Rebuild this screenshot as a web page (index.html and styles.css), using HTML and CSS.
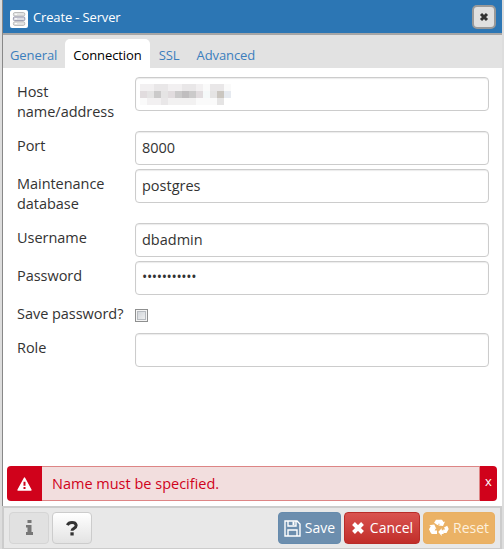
FILE: index.html
```html
<!DOCTYPE html>
<html lang="en">
<head>
<meta charset="utf-8">
<title>Create - Server</title>
<link rel="stylesheet" href="styles.css">
</head>
<body>
<div class="dialog">
  <header class="titlebar">
    <svg class="server" width="18" height="18" viewBox="0 0 18 18"><rect width="18" height="18" rx="2" fill="#fff"/><g fill="#e4e4e4" stroke="#b4b4b4" stroke-width=".9"><rect x="3.4" y="2.5" width="11.4" height="3.6" rx="1.5"/><rect x="3.4" y="11.8" width="11.4" height="3.6" rx="1.5"/></g><rect x="3.4" y="7" width="11.4" height="3.6" rx="1" fill="#dedee4" stroke="#9999ae"/><path d="M5 4.3h2M5 8.8h2M5 13.6h2" stroke="#fff"/></svg>
    <h1 class="title">Create - Server</h1>
    <button class="close" aria-label="Close"><svg width="10" height="10" viewBox="0 0 10 10"><path d="M2 2l6 6M8 2L2 8" stroke="#333" stroke-width="3"/></svg></button>
  </header>
  <nav class="tabs"><a class="tab">General</a><a class="tab active">Connection</a><a class="tab">SSL</a><a class="tab">Advanced</a></nav>
  <main class="form">
    <div class="row"><label class="label">Host name/address</label><div class="input masked">
      <svg width="91" height="21" viewBox="0 0 13 3" shape-rendering="crispEdges"><path fill="#f2f0f1" d="M0 0h13v1H0zM0 2h3v1H0zM8 2h4v1H8z"/><path fill="#e9e7e8" d="M2 0h2v1H2zM6 0h2v1H6zM10 0h2v1h-2zM3 2h1v1H3z"/><path fill="#f2f1f1" d="M4 2h4v1H4z"/><path fill="#fafafa" d="M9 0h1v1H9zM12 0h1v1h-1zM8 2h3v1H8zM0 2h1v1H0z"/><path fill="#e1dcde" d="M0 1h1v1H0zM4 1h1v1H4zM8 1h1v1H8z"/><path fill="#e5e4e4" d="M1 1h1v1H1zM3 1h1v1H3zM10 1h1v1h-1zM11 2h1v1h-1z"/><path fill="#cbcaca" d="M2 1h1v1H2zM5 1h1v1H5zM7 1h1v1H7z"/><path fill="#c0bebf" d="M6 1h1v1H6z"/><path fill="#f5f9f9" d="M9 1h1v1H9z"/><path fill="#cac6c0" d="M11 1h1v1h-1z"/><path fill="#e6eaf0" d="M12 1h1v1h-1z"/></svg></div></div>
    <div class="row"><label class="label">Port</label><div class="input">8000</div></div>
    <div class="row"><label class="label">Maintenance database</label><div class="input">postgres</div></div>
    <div class="row"><label class="label">Username</label><div class="input">dbadmin</div></div>
    <div class="row"><label class="label">Password</label><div class="input password"><span class="dots">•••••••••••</span></div></div>
    <div class="row check-row"><label class="label">Save password?</label><span class="checkbox"></span></div>
    <div class="row"><label class="label">Role</label><div class="input"></div></div>
  </main>
  <div class="alert">
    <div class="alert-icon"><svg width="15" height="14" viewBox="0 0 15 14"><path d="M7.5 1L14 13H1z" fill="#fff" stroke="#fff" stroke-width="1.4" stroke-linejoin="round"/><path d="M7.5 4.7v4M7.5 10v2" stroke="#d0021b" stroke-width="2"/></svg></div>
    <div class="alert-text">Name must be specified.</div>
    <button class="alert-close">x</button>
  </div>
  <footer class="footer">
    <button class="btn info" aria-label="Info"><svg width="9" height="16" viewBox="0 0 9 16"><path d="M2.5 0h4v3h-4zM1 5h5.5v7H8v3H1v-3h1.5V7.5H1z" fill="#777"/></svg></button>
    <button class="btn help" aria-label="Help"><svg width="12" height="15" viewBox="0 0 12 15"><path d="M1.3 4.2C2.2 2.3 3.7 1.5 6 1.5c4.8 0 5.3 4.1 2 5.8-1.5.8-2 1.1-2 2.5" fill="none" stroke="#333" stroke-width="3"/><path d="M4.4 11.3h3.3v3.2H4.4z" fill="#333"/></svg></button>
    <button class="btn save"><svg width="17" height="17" viewBox="0 0 17 17"><path d="M1 1h12l3 3v12H1zM4 1v5h8V1M4 16v-6h9v6" fill="none" stroke="#fff" stroke-width="1.4"/><path d="M8.5 1.5h2v3.5h-2z" fill="#fff"/></svg><span>Save</span></button>
    <button class="btn cancel"><svg width="14" height="14" viewBox="0 0 14 14"><path d="M2.5 2.5l9 9M11.5 2.5l-9 9" stroke="#fff" stroke-width="4"/></svg><span>Cancel</span></button>
    <button class="btn reset"><svg width="20" height="18" viewBox="0 0 20 18"><g fill="#fff"><path d="M5.1 3.8L7 .8h4.5L9.2 5.9 8.4 6z"/><path d="M11 .7h2l1.5 2.4 1.5-.7-2 4.7-4.8-.7 1.5-.9-1.5-2.6z"/><path d="M15 8.5l3.2-1.8 1.5 3.2-2.2 4h-3.2l-.1-3.5h2z"/><path d="M9.2 13l3.5-3.7v1.9h2.1l-.2 3.7h-1.9v2.2z"/><path d="M2.6 14.9L1.4 12l1.4-2.7h4.1L5.6 11.5H8v3.6z"/><path d="M.2 6.2l5.1-.8 2.1 4.7-1.7-.9-2 3.4-1.6 1.9L0 10.2l1.7-3z"/></g></svg><span>Reset</span></button>
  </footer>
</div>
</body>
</html>
```
FILE: styles.css
```css
* { box-sizing: border-box; }
body { margin: 0; width: 504px; height: 549px; overflow: hidden; background: #ddd; color: #333; font: 14.5px/20px "Open Sans", sans-serif; }
button { font-family: inherit; margin: 0; padding: 0; }
svg { display: block; flex: none; }
.dialog { width: 500px; height: 549px; margin-left: 2px; background: #fff; display: flex; flex-direction: column; box-shadow: inset 1px 0 #888; }
.titlebar { height: 35px; margin-left: 1px; background: #2c76b4; border-bottom: 2px solid #a6a6a6; display: flex; align-items: center; padding: 3px 6px 0 7px; flex: none; }
.server { margin-top: 2px; }
.title { margin: -2px auto 0 5px; color: #fff; font-size: 13px; font-weight: 400; letter-spacing: -.15px; }
.close { width: 24px; height: 24px; margin-top: -2px; border: 2px solid #999; border-radius: 5px; background: #e0e0e0; display: flex; align-items: center; justify-content: center; }
.tabs { height: 33px; margin-left: 1px; background: #e2e2e2; display: flex; align-items: flex-end; flex: none; font-size: 13px; letter-spacing: -.08px; color: #3b7ebd; }
.tab { height: 29px; padding: 6px 8px 0 9px; line-height: 20px; }
.tab:first-child { padding-left: 7px; padding-right: 8px; }
.tab.active { background: #fff; color: #000; border-radius: 5px 5px 0 0; padding-left: 8px; }
.form { flex: 1; padding: 9px 13px 0 15px; }
.row { display: grid; grid-template-columns: 118px 1fr; margin-bottom: 4px; align-items: start; }
.label { padding-top: 5px; padding-bottom: 5px; width: 112px; letter-spacing: -.04px; }
.input { height: 34px; border: 1px solid #ccc; border-radius: 4px; padding: 6px; background: #fff; box-shadow: inset 0 1px 1px rgba(0,0,0,.08); }
.masked { padding: 6px 4px; }
.password { padding-top: 5px; }
.dots { font-size: 14px; letter-spacing: -.35px; }
.check-row { height: 30px; }
.check-row .label { width: 118px; }
.checkbox { width: 13px; height: 13px; margin-top: 10px; border: 1px solid #8e8f8f; background: linear-gradient(135deg, #cacfd5, #f6f6f6); box-shadow: inset 0 0 0 1px #f4f4f4, inset 0 0 0 2px #b7bbc0; }
.alert { height: 35px; margin: 0 5px 5px; display: flex; flex: none; }
.alert-icon { width: 35px; background: #d0021b; border-radius: 4px 0 0 4px; display: flex; align-items: center; justify-content: center; }
.alert-text { flex: 1; border: 1px solid #dd8585; border-left: 0; background: #f2dede; color: #d0021b; padding: 7px 10px; }
.alert-close { width: 17px; border: 0; border-radius: 0 4px 4px 0; background: #d0021b; color: #fff; font-size: 13px; padding-bottom: 5px; }
.footer { height: 43px; border: 2px solid #ccc; border-bottom-width: 1px; background: #e8e8e8; display: flex; align-items: flex-start; padding: 4px 5px; gap: 3px; flex: none; }
.btn { height: 32px; border: 1px solid #ccc; border-radius: 4px; display: flex; align-items: center; justify-content: center; gap: 4px; color: #fff; font-size: 14px; flex: none; }
.btn span { margin-top: -2px; }
.info { width: 40px; background: #e1e1e1; border-color: #d5d5d5; }
.help { width: 40px; background: linear-gradient(#fff, #e3e3e3); }
.save { width: 63px; margin-left: auto; background: #6c8eae; border-color: #668bad; }
.cancel { width: 76px; gap: 5px; background: linear-gradient(#d9534f, #c12e2a); border-color: #b92c28; }
.reset { width: 72px; background: #ebb265; border-color: #e9b062; color: #fdf0dd; }
```
